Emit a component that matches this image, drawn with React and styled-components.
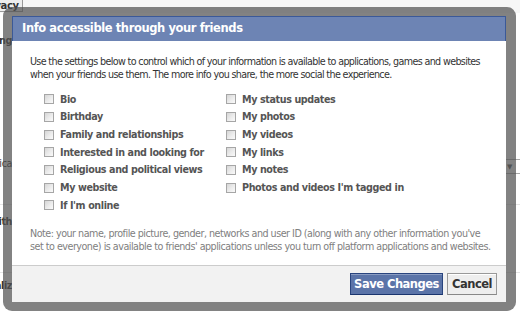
import React from "react";
import styled, { createGlobalStyle } from "styled-components";

const GlobalStyle = createGlobalStyle`
  html, body { margin: 0; padding: 0; }
  body {
    width: 520px;
    height: 315px;
    overflow: hidden;
    background: #fff;
    font-family: "DejaVu Sans", Tahoma, Verdana, sans-serif;
  }
`;

const Stage = styled.div`
  position: relative;
  width: 520px;
  height: 315px;
  overflow: hidden;
  background: #fff;
`;

/* ---------- page behind the dialog ---------- */
const Page = styled.div`
  display: flex;
  flex-direction: column;
`;

const TopStrip = styled.div`
  height: 13px;
  background: #f7f7f7;
  display: flex;
  align-items: flex-start;
`;

const TabButton = styled.div`
  margin-left: -24px;
  height: 12px;
  box-sizing: border-box;
  padding: 0 3px;
  border: 1px solid #999;
  border-top: none;
  background: #eee;
  color: #333;
  font-size: 10px;
  font-weight: bold;
  letter-spacing: -0.4px;
  line-height: 11px;
`;

const PageRow = styled.div`
  height: ${(p) => p.$h}px;
  padding-top: ${(p) => p.$pad}px;
  box-sizing: border-box;
  border-bottom: 1px solid ${(p) => (p.$line ? "#e5e5e5" : "transparent")};
  display: flex;
  align-items: flex-start;
  justify-content: space-between;
`;

const PageLabel = styled.div`
  margin-left: -40px;
  width: 52px;
  text-align: right;
  white-space: nowrap;
  font-size: 9.6px;
  line-height: 13px;
  letter-spacing: -0.4px;
  font-weight: ${(p) => (p.$bold ? "bold" : "normal")};
  color: #333;
`;

const PageSelect = styled.div`
  width: 14px;
  height: 13px;
  margin-right: -2px;
  border: 1px solid #aaa;
  background: #fff;
  display: flex;
  align-items: center;
  justify-content: flex-start;
  padding-left: 2px;
  font-size: 7px;
  color: #555;
  margin-top: 2px;
`;

/* ---------- dialog ---------- */
const Frame = styled.div`
  position: absolute;
  left: 3px;
  top: 7px;
  width: 513px;
  height: 304px;
  box-sizing: border-box;
  padding: 9px 10px 9px 9px;
  border-radius: 9px;
  background: rgba(82, 82, 82, 0.72);
`;

const Dialog = styled.div`
  height: 100%;
  display: flex;
  flex-direction: column;
  background: #fff;
`;

const Header = styled.h2`
  margin: 0;
  height: 25px;
  box-sizing: border-box;
  padding: 3px 9px 0;
  background: #6d84b4;
  border: 1px solid #3b5998;
  border-bottom: none;
  color: #fff;
  font-size: 11.5px;
  letter-spacing: -0.4px;
  font-weight: bold;
  line-height: 17px;
`;

const Body = styled.div`
  flex: 1;
  padding: 15px 12px 0 18px;
  display: flex;
  flex-direction: column;
`;

const Intro = styled.p`
  margin: 0;
  font-size: 9.6px;
  letter-spacing: -0.65px;
  line-height: 12.5px;
  color: #333;
`;

const Grid = styled.div`
  margin: 9.5px 0 0 14px;
  display: grid;
  grid-template-columns: 182px 1fr;
  grid-auto-flow: column;
  grid-template-rows: repeat(7, 17.67px);
`;

const Option = styled.label`
  display: flex;
  align-items: center;
  gap: 6px;
  font-size: 9.6px;
  letter-spacing: -0.4px;
  font-weight: bold;
  color: #555;
  white-space: nowrap;
`;

const Box = styled.input`
  appearance: none;
  margin: 0;
  width: 10px;
  height: 10px;
  box-sizing: border-box;
  border: 1px solid #a6a6a6;
  background: linear-gradient(135deg, #d6d6d6 0%, #ececec 55%, #fafafa 100%);
  flex: none;
`;

const Note = styled.p`
  margin: 12.5px 0 0;
  font-size: 9.6px;
  letter-spacing: -0.5px;
  line-height: 13.3px;
  color: #808080;
`;

const Footer = styled.div`
  height: 37px;
  box-sizing: border-box;
  border-top: 1px solid #ccc;
  background: #f2f2f2;
  padding: 7px 9px 0;
  display: flex;
  justify-content: flex-end;
  align-items: flex-start;
  gap: 4px;
`;

const Button = styled.button`
  width: ${(p) => p.$w}px;
  height: 22px;
  box-sizing: border-box;
  padding: 0;
  display: flex;
  align-items: center;
  justify-content: center;
  font-family: inherit;
  font-size: 11.5px;
  letter-spacing: -0.5px;
  font-weight: bold;
  line-height: 20px;
  border: 1px solid ${(p) => (p.$primary ? "#29447e" : "#999")};
  border-bottom-color: ${(p) => (p.$primary ? "#1a356e" : "#888")};
  background: ${(p) => (p.$primary ? "#5b74a8" : "#eee")};
  color: ${(p) => (p.$primary ? "#fff" : "#333")};
  box-shadow: inset 0 1px 0 ${(p) => (p.$primary ? "#8a9cc2" : "#fff")};
  cursor: pointer;
`;

const left = [
  "Bio",
  "Birthday",
  "Family and relationships",
  "Interested in and looking for",
  "Religious and political views",
  "My website",
  "If I'm online",
];
const right = [
  "My status updates",
  "My photos",
  "My videos",
  "My links",
  "My notes",
  "Photos and videos I'm tagged in",
];

export default function App() {
  return (
    <Stage>
      <GlobalStyle />
      <Page>
        <TopStrip>
          <TabButton>Privacy</TabButton>
        </TopStrip>
        <PageRow $h={97} $pad={21}>
          <PageLabel $bold>Setting</PageLabel>
        </PageRow>
        <PageRow $h={95} $pad={47} $line>
          <PageLabel>Applica</PageLabel>
          <PageSelect>▼</PageSelect>
        </PageRow>
        <PageRow $h={68} $pad={10} $line>
          <PageLabel $bold>with</PageLabel>
        </PageRow>
        <PageRow $h={42} $pad={6}>
          <PageLabel $bold>Personalize</PageLabel>
        </PageRow>
      </Page>

      <Frame>
        <Dialog role="dialog" aria-label="Info accessible through your friends">
          <Header>Info accessible through your friends</Header>
          <Body>
            <Intro>
              Use the settings below to control which of your information is available to applications, games and websites
              when your friends use them. The more info you share, the more social the experience.
            </Intro>
            <Grid>
              {left.map((t) => (
                <Option key={t}>
                  <Box type="checkbox" />
                  {t}
                </Option>
              ))}
              {right.map((t) => (
                <Option key={t}>
                  <Box type="checkbox" />
                  {t}
                </Option>
              ))}
            </Grid>
            <Note>
              Note: your name, profile picture, gender, networks and user ID (along with any other information you've
              set to everyone) is available to friends' applications unless you turn off platform applications and websites.
            </Note>
          </Body>
          <Footer>
            <Button $primary $w={93}>Save Changes</Button>
            <Button $w={50}>Cancel</Button>
          </Footer>
        </Dialog>
      </Frame>
    </Stage>
  );
}
